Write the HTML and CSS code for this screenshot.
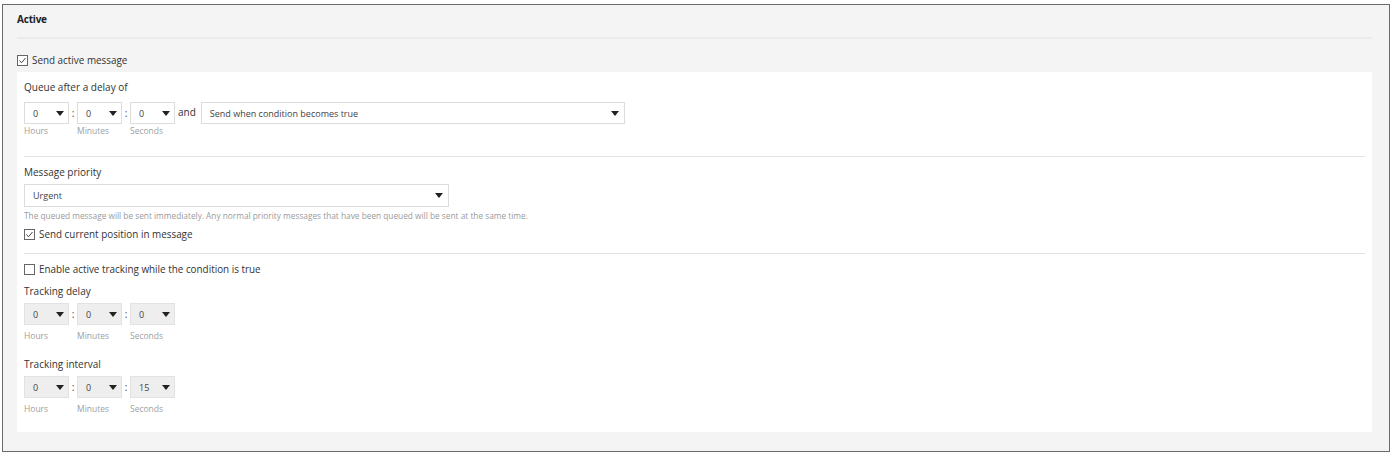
FILE: index.html
```html
<!DOCTYPE html>
<html>
<head>
<meta charset="utf-8">
<link rel="stylesheet" href="styles.css">
</head>
<body>
<div class="section">
  <div class="section-header">Active</div>
  <label class="check-row top-check">
    <svg class="cb" width="11" height="11" viewBox="0 0 11 11"><rect x="0.5" y="0.5" width="10" height="10" fill="#fff" stroke="#666"/><path d="M2.5 5.5 L4.5 7.8 L8.5 3" fill="none" stroke="#444" stroke-width="1"/></svg>
    <span>Send active message</span>
  </label>
  <div class="panel">
    <div class="field-label first">Queue after a delay of</div>
    <div class="time-row">
      <div class="time-group">
        <div class="sel small"><span>0</span><svg class="arrow" width="8" height="5" viewBox="0 0 8 5"><path d="M0 0 H8 L4 5 Z" fill="#222"/></svg></div>
        <div class="unit">Hours</div>
      </div>
      <div class="colon">:</div>
      <div class="time-group">
        <div class="sel small"><span>0</span><svg class="arrow" width="8" height="5" viewBox="0 0 8 5"><path d="M0 0 H8 L4 5 Z" fill="#222"/></svg></div>
        <div class="unit">Minutes</div>
      </div>
      <div class="colon">:</div>
      <div class="time-group">
        <div class="sel small"><span>0</span><svg class="arrow" width="8" height="5" viewBox="0 0 8 5"><path d="M0 0 H8 L4 5 Z" fill="#222"/></svg></div>
        <div class="unit">Seconds</div>
      </div>
      <div class="and">and</div>
      <div class="sel wide"><span>Send when condition becomes true</span><svg class="arrow" width="8" height="5" viewBox="0 0 8 5"><path d="M0 0 H8 L4 5 Z" fill="#222"/></svg></div>
    </div>
    <div class="sep sep1"></div>
    <div class="field-label">Message priority</div>
    <div class="sel priority"><span>Urgent</span><svg class="arrow" width="8" height="5" viewBox="0 0 8 5"><path d="M0 0 H8 L4 5 Z" fill="#222"/></svg></div>
    <div class="help">The queued message will be sent immediately. Any normal priority messages that have been queued will be sent at the same time.</div>
    <label class="check-row pos-check">
      <svg class="cb" width="11" height="11" viewBox="0 0 11 11"><rect x="0.5" y="0.5" width="10" height="10" fill="#fff" stroke="#666"/><path d="M2.5 5.5 L4.5 7.8 L8.5 3" fill="none" stroke="#444" stroke-width="1"/></svg>
      <span>Send current position in message</span>
    </label>
    <div class="sep sep2"></div>
    <label class="check-row track-check">
      <svg class="cb" width="11" height="11" viewBox="0 0 11 11"><rect x="0.5" y="0.5" width="10" height="10" fill="#fff" stroke="#666"/></svg>
      <span>Enable active tracking while the condition is true</span>
    </label>
    <div class="field-label tight">Tracking delay</div>
    <div class="time-row">
      <div class="time-group">
        <div class="sel small disabled"><span>0</span><svg class="arrow" width="8" height="5" viewBox="0 0 8 5"><path d="M0 0 H8 L4 5 Z" fill="#222"/></svg></div>
        <div class="unit spaced">Hours</div>
      </div>
      <div class="colon">:</div>
      <div class="time-group">
        <div class="sel small disabled"><span>0</span><svg class="arrow" width="8" height="5" viewBox="0 0 8 5"><path d="M0 0 H8 L4 5 Z" fill="#222"/></svg></div>
        <div class="unit spaced">Minutes</div>
      </div>
      <div class="colon">:</div>
      <div class="time-group">
        <div class="sel small disabled"><span>0</span><svg class="arrow" width="8" height="5" viewBox="0 0 8 5"><path d="M0 0 H8 L4 5 Z" fill="#222"/></svg></div>
        <div class="unit spaced">Seconds</div>
      </div>
    </div>
    <div class="field-label interval">Tracking interval</div>
    <div class="time-row">
      <div class="time-group">
        <div class="sel small disabled"><span>0</span><svg class="arrow" width="8" height="5" viewBox="0 0 8 5"><path d="M0 0 H8 L4 5 Z" fill="#222"/></svg></div>
        <div class="unit spaced">Hours</div>
      </div>
      <div class="colon">:</div>
      <div class="time-group">
        <div class="sel small disabled"><span>0</span><svg class="arrow" width="8" height="5" viewBox="0 0 8 5"><path d="M0 0 H8 L4 5 Z" fill="#222"/></svg></div>
        <div class="unit spaced">Minutes</div>
      </div>
      <div class="colon">:</div>
      <div class="time-group">
        <div class="sel small disabled"><span>15</span><svg class="arrow" width="8" height="5" viewBox="0 0 8 5"><path d="M0 0 H8 L4 5 Z" fill="#222"/></svg></div>
        <div class="unit spaced">Seconds</div>
      </div>
    </div>
  </div>
</div>
</body>
</html>
```

FILE: styles.css
```css
* { box-sizing: border-box; }
body {
  margin: 0;
  background: #ffffff;
  font-family: "Open Sans", "Liberation Sans", sans-serif;
  color: #333;
}
.section {
  margin: 4px 6px 0 2px;
  height: 448px;
  border: 1px solid #6a6a6a;
  background: #f4f4f4;
  padding: 0 17px 0 14px;
}
.section-header {
  height: 34px;
  padding-top: 6px;
  font-size: 10px;
  font-weight: 700;
  line-height: 16px;
  color: #222;
  border-bottom: 2px solid #eaeaea;
  letter-spacing: -0.2px;
}
.check-row {
  display: flex;
  align-items: center;
  height: 16px;
  font-size: 9.9px;
  line-height: 16px;
  color: #333;
}
.check-row .cb { flex: none; margin-right: 4px; }
.top-check { margin-top: 13px; margin-bottom: 4px; }
.panel {
  background: #ffffff;
  height: 360px;
  padding: 7px 7px 0 7px;
}
.field-label {
  font-size: 10px;
  line-height: 16px;
  height: 16px;
  color: #333;
}
.field-label + .time-row { margin-top: 7px; }
.field-label.tight + .time-row { margin-top: 4px; }
.field-label.interval + .time-row { margin-top: 4px; }
.time-row {
  display: flex;
  align-items: flex-start;
}
.time-group {
  display: flex;
  flex-direction: column;
}
.sel {
  display: flex;
  align-items: center;
  justify-content: space-between;
  height: 22px;
  border: 1px solid #dcdcdc;
  background: #fff;
  font-size: 9px;
  color: #444;
  padding: 0 4px 0 8px;
}
.sel.small { width: 45px; }
.sel.disabled { background: #eeeeee; border-color: #e2e2e2; }
.sel.wide { width: 424px; margin-left: 5px; padding-right: 5px; }
.sel.priority { width: 425px; margin-top: 4px; height: 23px; padding-right: 5px; }
.arrow { flex: none; }
.colon {
  width: 8px;
  text-align: center;
  font-size: 10px;
  line-height: 22px;
  color: #444;
}
.and {
  margin-left: 3px;
  font-size: 10px;
  line-height: 20px;
  color: #333;
}
.unit {
  font-size: 8.5px;
  line-height: 12px;
  color: #a0a0a0;
  margin-top: 1px;
}
.unit.spaced { margin-top: 5px; }
.sep {
  height: 1px;
  background: #e2e2e2;
}
.sep1 { margin-top: 19px; margin-bottom: 7px; }
.help {
  margin-top: 3px;
  font-size: 8.3px;
  line-height: 12px;
  color: #9a9a9a;
}
.pos-check { margin-top: 4px; }
.sep2 { margin-top: 11px; margin-bottom: 7px; }
.field-label.tight { margin-top: 6px; }
.field-label.interval { margin-top: 14px; }
```
